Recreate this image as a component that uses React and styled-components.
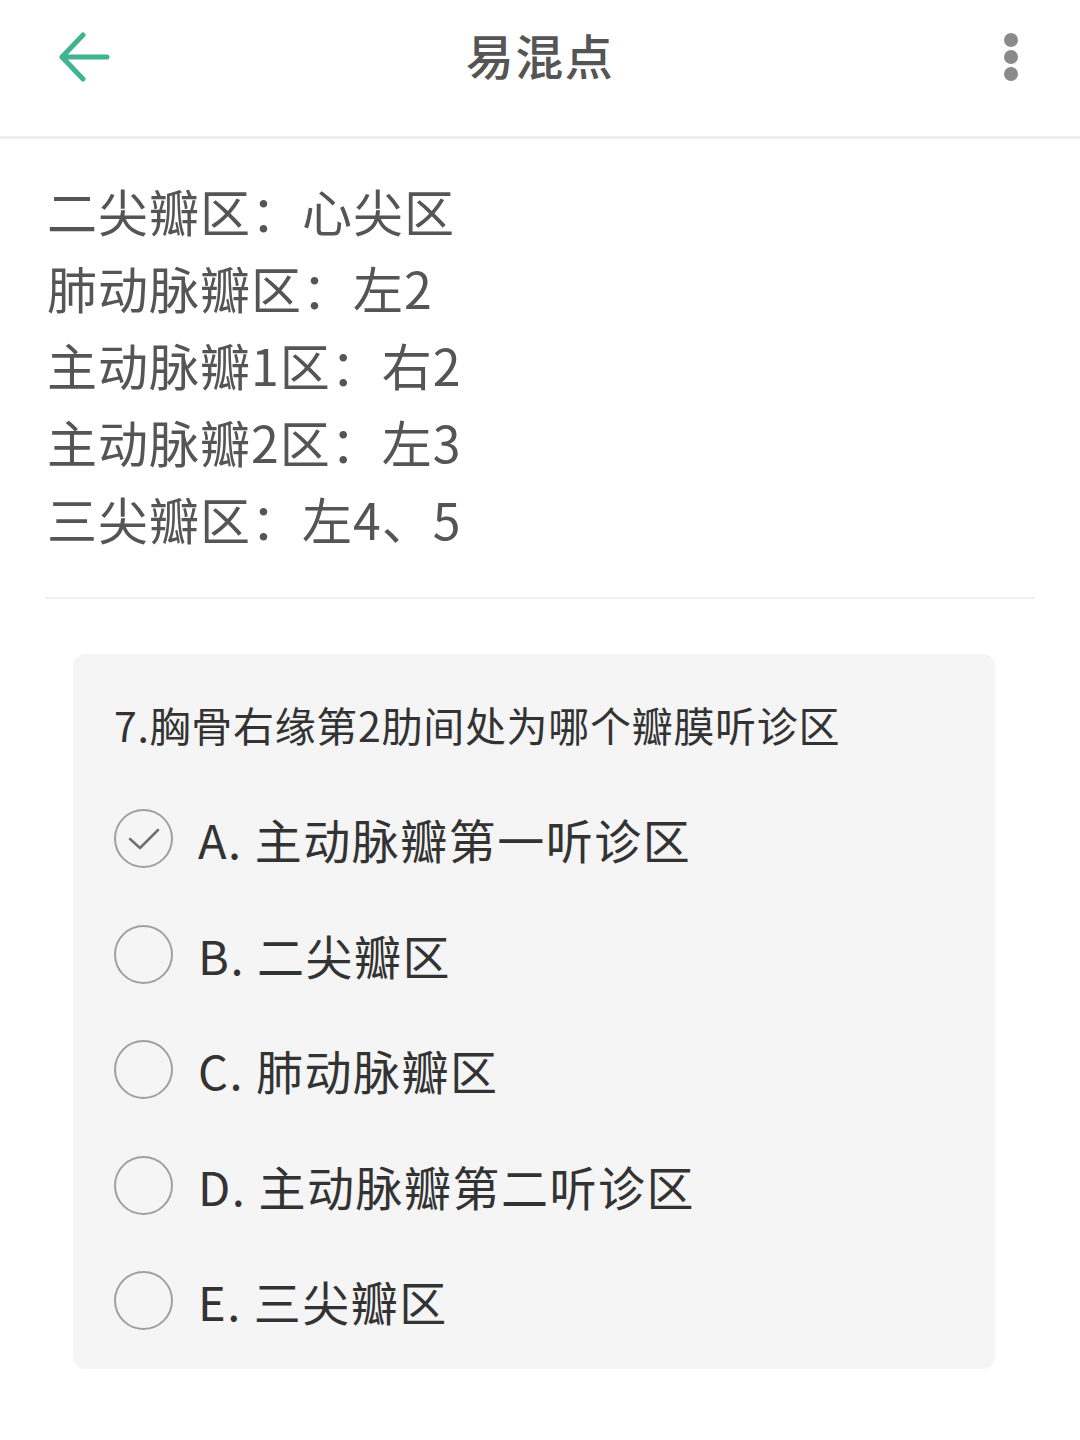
import React from 'react'
import styled, { createGlobalStyle } from 'styled-components'

const GlobalStyle = createGlobalStyle`
    body {
        margin: 0;
        background: #fff;
        font-family: "Noto Sans CJK SC", "Noto Sans", sans-serif;
    }
`;

const Page = styled.div`
    width: 1080px;
    min-height: 1440px;
    background: #fff;
`;

const Header = styled.header`
    height: 139px;
    box-sizing: border-box;
    padding-bottom: 22px;
    display: grid;
    grid-template-columns: 160px 1fr 160px;
    align-items: center;
    border-bottom: 3px solid #efefef;
`;

const BackButton = styled.div`
    padding-left: 58px;
    display: flex;
    align-items: center;
`;

const Title = styled.h1`
    margin: 0 0 6px;
    text-align: center;
    font-size: 48px;
    font-weight: 500;
    color: #555;
    letter-spacing: 1.5px;
`;

const MenuButton = styled.div`
    display: flex;
    justify-content: flex-end;
    padding-right: 61px;
`;

const Notes = styled.div`
    margin: 0 45px;
    padding: 33px 0 40px 2px;
    border-bottom: 2px solid #f0f0f0;
`;

const NoteLine = styled.p`
    margin: 0;
    font-size: 50px;
    line-height: 77px;
    color: #555;
    letter-spacing: 1px;
`;

const Card = styled.section`
    margin: 55px 85px 0 73px;
    background: #f5f5f5;
    border-radius: 12px;
    padding: 42px 0 10px 41px;
`;

const Question = styled.p`
    margin: 0 0 29px;
    font-size: 41px;
    line-height: 56px;
    color: #333;
    letter-spacing: 0.7px;
`;

const Option = styled.div`
    height: 115.5px;
    display: flex;
    align-items: center;
    gap: 25px;
`;

const Radio = styled.span`
    width: 55px;
    height: 55px;
    border: 2px solid #a0a0a0;
    border-radius: 50%;
    display: flex;
    align-items: center;
    justify-content: center;
    flex-shrink: 0;
`;

const OptionText = styled.span`
    font-size: 47px;
    color: #333;
    letter-spacing: 1.5px;
`;

const notes = [
    '二尖瓣区：心尖区',
    '肺动脉瓣区：左2',
    '主动脉瓣1区：右2',
    '主动脉瓣2区：左3',
    '三尖瓣区：左4、5',
];

const options = [
    { key: 'A', text: '主动脉瓣第一听诊区', checked: true },
    { key: 'B', text: '二尖瓣区' },
    { key: 'C', text: '肺动脉瓣区' },
    { key: 'D', text: '主动脉瓣第二听诊区' },
    { key: 'E', text: '三尖瓣区' },
];

const App = () => {
    return (
        <Page>
            <GlobalStyle />
            <Header>
                <BackButton>
                    <svg width="52" height="50" viewBox="0 0 52 50" fill="none">
                        <path d="M25 3 L4 25 L25 47 M4 25 H49" stroke="#3fb48f" strokeWidth="5" strokeLinecap="round" strokeLinejoin="round" />
                    </svg>
                </BackButton>
                <Title>易混点</Title>
                <MenuButton>
                    <svg width="16" height="50" viewBox="0 0 16 50">
                        <circle cx="8" cy="8" r="7" fill="#8a8a8a" />
                        <circle cx="8" cy="25" r="7" fill="#8a8a8a" />
                        <circle cx="8" cy="42" r="7" fill="#8a8a8a" />
                    </svg>
                </MenuButton>
            </Header>

            <Notes>
                {notes.map((line) => (
                    <NoteLine key={line}>{line}</NoteLine>
                ))}
            </Notes>

            <Card>
                <Question>7.胸骨右缘第2肋间处为哪个瓣膜听诊区</Question>
                {options.map((item) => (
                    <Option key={item.key}>
                        <Radio>
                            {item.checked && (
                                <svg width="34" height="24" viewBox="0 0 34 24" fill="none">
                                    <path d="M3 12 L13 21 L31 3" stroke="#707070" strokeWidth="2.5" strokeLinecap="round" strokeLinejoin="round" />
                                </svg>
                            )}
                        </Radio>
                        <OptionText>{item.key}. {item.text}</OptionText>
                    </Option>
                ))}
            </Card>
        </Page>
    )
}

export default App
